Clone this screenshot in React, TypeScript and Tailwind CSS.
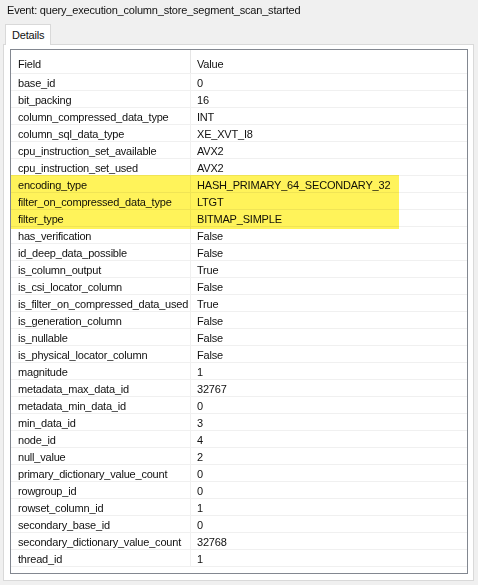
const rows: [string, string][] = [
  ["base_id", "0"],
  ["bit_packing", "16"],
  ["column_compressed_data_type", "INT"],
  ["column_sql_data_type", "XE_XVT_I8"],
  ["cpu_instruction_set_available", "AVX2"],
  ["cpu_instruction_set_used", "AVX2"],
  ["encoding_type", "HASH_PRIMARY_64_SECONDARY_32"],
  ["filter_on_compressed_data_type", "LTGT"],
  ["filter_type", "BITMAP_SIMPLE"],
  ["has_verification", "False"],
  ["id_deep_data_possible", "False"],
  ["is_column_output", "True"],
  ["is_csi_locator_column", "False"],
  ["is_filter_on_compressed_data_used", "True"],
  ["is_generation_column", "False"],
  ["is_nullable", "False"],
  ["is_physical_locator_column", "False"],
  ["magnitude", "1"],
  ["metadata_max_data_id", "32767"],
  ["metadata_min_data_id", "0"],
  ["min_data_id", "3"],
  ["node_id", "4"],
  ["null_value", "2"],
  ["primary_dictionary_value_count", "0"],
  ["rowgroup_id", "0"],
  ["rowset_column_id", "1"],
  ["secondary_base_id", "0"],
  ["secondary_dictionary_value_count", "32768"],
  ["thread_id", "1"],
];

export default function App() {
  return (
    <div className="w-[478px] h-[585px] bg-[#f0f0f0] text-[11px] leading-[16px] tracking-[-0.2px] text-[#111] font-['Liberation_Sans',Arial,sans-serif] overflow-hidden">
      <div className="h-[24px] pl-[7px] pt-[2px]">
        Event: query_execution_column_store_segment_scan_started
      </div>

      {/* tab strip */}
      <div className="flex pl-[5px]">
        <div className="relative z-10 h-[21px] -mb-px px-[6px] pt-[2px] bg-white border border-b-0 border-[#d9d9d9]">
          Details
        </div>
      </div>

      {/* tab panel */}
      <div className="ml-[3px] mr-[4px] h-[537px] bg-white border border-[#d9d9d9] pl-[6px] pr-[5px] pt-[4px]">
        <div className="relative h-[525px] border border-[#828790] bg-white">
          <div className="flex h-[24px] border-b border-[#f0f0f0]">
            <div className="w-[180px] pl-[7px] pt-[6px] border-r border-[#e5e5e5]">Field</div>
            <div className="flex-1 pl-[6px] pt-[6px]">Value</div>
          </div>
          {rows.map(([field, value]) => (
            <div key={field} className="flex h-[17px] border-b border-[#f0f0f0]">
              <div className="w-[180px] pl-[7px] pt-px border-r border-[#f0f0f0] whitespace-nowrap overflow-hidden">{field}</div>
              <div className="flex-1 pl-[6px] pt-px whitespace-nowrap">{value}</div>
            </div>
          ))}

          {/* highlighter mark */}
          <div className="absolute left-0 top-[125px] w-[388px] h-[54px] bg-[#fff35a] mix-blend-multiply pointer-events-none" />
        </div>
      </div>
    </div>
  );
}
